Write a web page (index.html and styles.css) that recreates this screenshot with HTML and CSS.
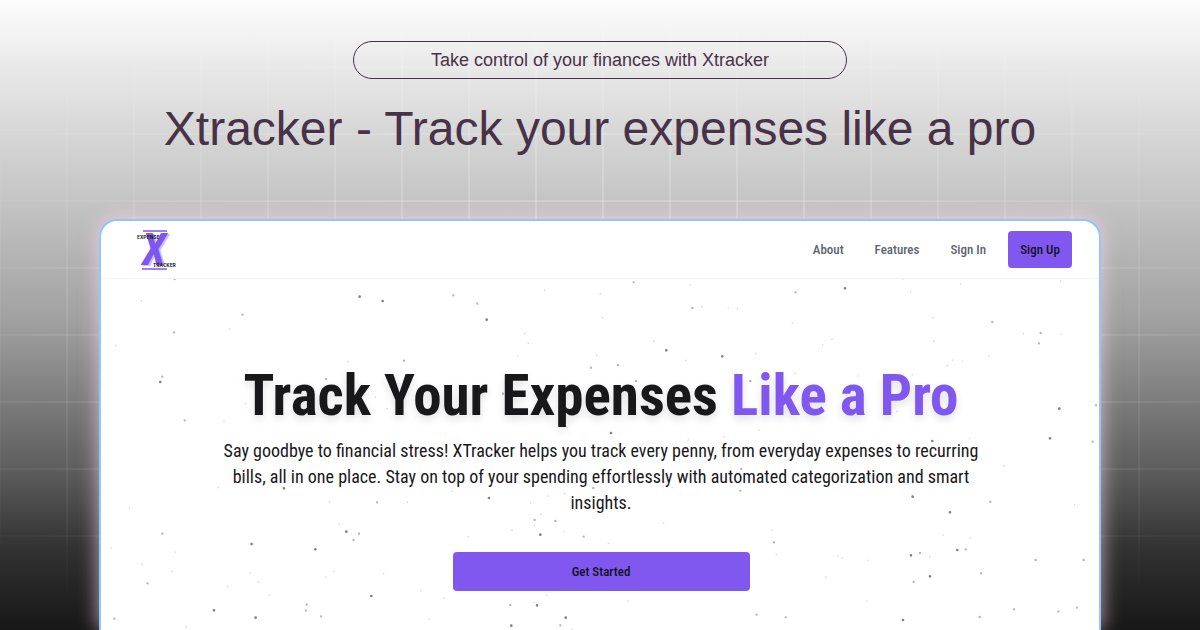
FILE: index.html
```html
<!DOCTYPE html>
<html lang="en">
<head>
<meta charset="utf-8">
<meta name="viewport" content="width=device-width, initial-scale=1">
<title>Xtracker - Track your expenses like a pro</title>
<link rel="stylesheet" href="styles.css">
</head>
<body>
<div class="page">
  <div class="grid-lines" aria-hidden="true"></div>
  <header class="intro">
    <p class="tagline">Take control of your finances with Xtracker</p>
    <h1 class="title">Xtracker - Track your expenses like a pro</h1>
  </header>
  <main class="window">
    <svg class="dots" viewBox="101 221 998 409" preserveAspectRatio="xMidYMin slice" aria-hidden="true">
      <g transform="translate(0 315) scale(.3333)">
        <path class="dot-dark" d="M481 201h0M852 520h0M755 687h0M946 703h0M1039 650h0M642 886h0M767 908h0M1114 843h0M1079 -55h0"/>
        <path class="dot-mid" d="M522 52h0M554 316h0M487 185h0M978 192h0M487 656h0M1131 562h0M1077 656h0M1061 675h0M443 805h0M343 911h0M918 887h0M920 869h0M963 904h0M728 -1h0M524 -108h0"/>
        <path class="dot-light" d="M688 42h0M347 91h0M1044 139h0M740 164h0M737 266h0M672 318h0M655 518h0M388 580h0M988 562h0M1018 628h0M334 699h0M526 711h0M427 748h0M517 769h0M751 774h0M776 802h0M683 814h0M808 840h0M977 787h0M1002 769h0M1151 776h0M558 935h0M1126 247h0M1162 281h0M424 -43h0"/>
      </g>
      <g transform="translate(400 280) scale(.3333)">
        <path class="dot-dark" d="M-52 63h0M260 119h0M799 211h0M967 229h0M1132 312h0M633 459h0M267 654h0M421 764h0M411 976h0M497 1013h0M334 1037h0"/>
        <path class="dot-mid" d="M160 46h0M232 71h0M12 242h0M701 7h0M877 84h0M1187 37h0M573 263h0M654 255h0M309 341h0M580 624h0M404 720h0M466 723h0M551 770h0M1122 787h0M331 975h0M481 1036h0M1021 632h0M1070 1004h0M1157 1012h0M708 303h0M1051 303h0M1024 567h0"/>
        <path class="dot-light" d="M434 31h0M601 41h0M608 113h0M374 160h0M385 190h0M353 228h0M590 226h0M763 184h0M857 241h0M871 15h0M907 80h0M985 84h0M1012 86h0M1177 129h0M1067 220h0M1185 280h0M1078 450h0M972 471h0M501 441h0M865 480h0M155 634h0M494 640h0M444 648h0M22 667h0M392 668h0M423 703h0M403 736h0M336 751h0M205 770h0M491 755h0M625 790h0M791 729h0M817 622h0M1117 750h0M1129 824h0M63 932h0M133 955h0M440 945h0M402 967h0M684 963h0M88 1017h0M516 1048h0M531 357h0"/>
      </g>
      <g transform="translate(800 280) scale(.3333)">
        <path class="dot-dark" d="M135 25h0M778 386h0M397 483h0M338 650h0M450 697h0M390 889h0M309 1020h0M750 475h0M472 810h0M333 826h0"/>
        <path class="dot-mid" d="M577 126h0M722 159h0M717 190h0M888 376h0M878 485h0M571 665h0M360 819h0M497 808h0M341 906h0M543 880h0M707 840h0M851 840h0M642 988h0M539 1011h0M831 983h0M775 995h0"/>
        <path class="dot-light" d="M309 -3h0M482 13h0M332 35h0M399 113h0M670 160h0M784 162h0M403 184h0M68 194h0M96 178h0M567 228h0M458 240h0M488 243h0M442 257h0M174 288h0M337 284h0M509 475h0M613 557h0M824 674h0M430 765h0M511 773h0M115 828h0M127 834h0M203 841h0M389 831h0M77 892h0M201 964h0M291 395h0M782 3h0"/>
      </g>
    </svg>
    <div class="navbar">
      <a class="logo" href="#" aria-label="Expense Tracker home">
        <svg class="logo-art" width="40" height="42" viewBox="0 0 40 42">
          <path d="M7 2H31M6 40H31" stroke="#7f56ef" stroke-width="1.6"/>
          <text class="logo-x logo-shade" x="8" y="37">X</text>
          <text class="logo-x" x="6" y="36">X</text>
          <text class="logo-word" x="1" y="10">EXPENSE</text>
          <text class="logo-word" x="17" y="38">TRACKER</text>
        </svg>
      </a>
      <nav class="links">
        <a class="link" href="#about">About</a>
        <a class="link" href="#features">Features</a>
        <a class="link" href="#signin">Sign In</a>
        <button class="button sign-up" type="button">Sign Up</button>
      </nav>
    </div>
    <section class="hero">
      <h2 class="headline">Track Your Expenses <span class="accent">Like a Pro</span></h2>
      <p class="lead">Say goodbye to financial stress! XTracker helps you track every penny, from everyday expenses to recurring bills, all in one place. Stay on top of your spending effortlessly with automated categorization and smart insights.</p>
      <button class="button get-started" type="button">Get Started</button>
    </section>
  </main>
</div>
</body>
</html>
```
FILE: styles.css
```css
* { box-sizing: border-box; }
body { margin: 0; font-family: "Liberation Sans", Arial, sans-serif; }
.page {
  position: relative;
  height: 100vh;
  overflow: hidden;
  display: flex;
  flex-direction: column;
  align-items: center;
  background: linear-gradient(#fdfdfd 0%, #e8e8e8 11%, #c4c4c4 32%, #a0a0a0 51%, #5c5c5c 75%, #323232 87%, #171717 100%);
}
.grid-lines {
  position: absolute;
  inset: 0;
  background-image:
    linear-gradient(to right, rgba(255,255,255,.28) 2px, transparent 2px),
    linear-gradient(rgba(255,255,255,.28) 2px, transparent 2px);
  background-size: 67px 67px;
  background-position: -1px -1px;
  mask-image: radial-gradient(ellipse at center, #000 10%, transparent 90%);
}
.intro {
  position: relative;
  width: 100%;
  padding-top: 41px;
  display: flex;
  flex-direction: column;
  align-items: center;
  color: #483248;
}
.tagline {
  margin: 0;
  width: 41.2%;
  border: 1px solid #483248;
  border-radius: 20px;
  font-size: 18px;
  line-height: 36px;
  text-align: center;
}
.title {
  margin: 22px 0 0;
  font-size: 48px;
  line-height: 56px;
  font-weight: 400;
  text-align: center;
}
.window {
  position: relative;
  flex: 1;
  width: 83.5%;
  margin-top: 62px;
  border: 2px solid #90c5ff;
  border-bottom: 0;
  border-radius: 18px 18px 0 0;
  background: #fff;
  box-shadow: 0 0 20px rgba(255, 214, 236, .75);
  font-family: "Roboto Condensed", Roboto, sans-serif;
  color: #18181b;
}
.dots {
  position: absolute;
  inset: 0;
  width: 100%;
  height: 100%;
}
.dot-dark, .dot-mid, .dot-light { stroke-linecap: round; fill: none; }
.dot-dark { stroke: #808080; stroke-width: 8; }
.dot-mid { stroke: #b4b4b4; stroke-width: 7; }
.dot-light { stroke: #d8d8d8; stroke-width: 5; }
.navbar {
  position: relative;
  display: flex;
  align-items: center;
  justify-content: space-between;
  height: 58px;
  padding: 0 27px 0 35px;
  border-bottom: 1px solid #f4f4f5;
}
.logo { display: flex; }
.logo-art { overflow: visible; }
.logo-x { font: italic 700 44px "Roboto Condensed", Roboto, sans-serif; fill: #7f56ef; }
.logo-shade { fill: #cdbcf8; }
.logo-word { font: 500 6px "Roboto Condensed", Roboto, sans-serif; fill: #111; }
.links { display: flex; align-items: center; gap: 31px; }
.link { font-size: 13px; font-weight: 500; color: #5b6472; text-decoration: none; }
.button {
  border: 0;
  border-radius: 4px;
  background: #8058f0;
  color: #14101f;
  font-family: inherit;
  font-size: 13px;
  font-weight: 500;
}
.sign-up { width: 64px; height: 37px; margin-left: -9px; padding: 0; }
.hero {
  position: relative;
  display: flex;
  flex-direction: column;
  align-items: center;
  padding: 85px 0 0 2px;
  text-align: center;
}
.headline {
  margin: 0;
  font-size: 57px;
  line-height: 64px;
  text-shadow: 0 4px 8px rgba(0, 0, 0, .12);
}
.accent { color: #8058f0; }
.lead {
  max-width: 780px;
  margin: 10px 0 0;
  font-size: 18px;
  line-height: 26px;
}
.get-started { width: 297px; height: 39px; margin-top: 36px; }
```
